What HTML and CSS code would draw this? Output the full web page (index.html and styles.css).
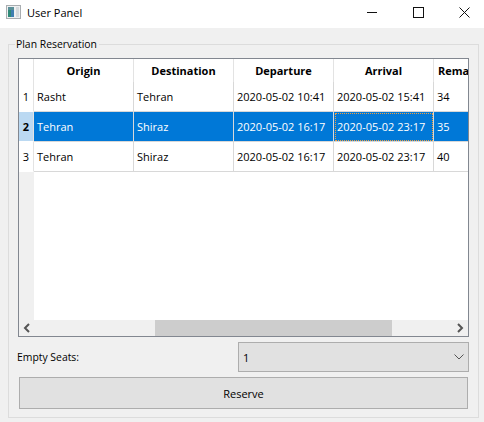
FILE: index.html
```html
<!DOCTYPE html>
<html lang="en">
<head>
    <meta charset="UTF-8">
    <title>User Panel</title>
    <link rel="stylesheet" href="styles.css">
</head>
<body>
    <div class="titlebar">
        <svg class="app-icon" width="15" height="14" viewBox="0 0 15 14">
            <rect x="0" y="0" width="15" height="14" fill="#a9adb0"/>
            <rect x="1" y="1" width="13" height="12" fill="#eef0f1"/>
            <rect x="2" y="2" width="3" height="10" fill="#2f8a78"/>
            <rect x="5" y="2" width="3" height="10" fill="#3f7fb0"/>
            <rect x="2" y="2" width="6" height="3" fill="#5a8f98"/>
            <rect x="10" y="2" width="3" height="10" fill="#d5dadd"/>
        </svg>
        <span class="title">User Panel</span>
        <div class="win-buttons">
            <svg width="11" height="11" viewBox="0 0 11 11"><path d="M0 5.5H10" stroke="#111" fill="none"/></svg>
            <svg width="11" height="11" viewBox="0 0 11 11"><rect x="0.5" y="0.5" width="10" height="10" stroke="#111" fill="none"/></svg>
            <svg width="11" height="11" viewBox="0 0 11 11"><path d="M0.5 0.5L10.5 10.5M10.5 0.5L0.5 10.5" stroke="#111" fill="none"/></svg>
        </div>
    </div>

    <div class="content">
        <fieldset class="group">
            <legend>Plan Reservation</legend>

            <div class="table-frame">
                <div class="viewport">
                    <table>
                        <thead>
                            <tr>
                                <th class="corner"></th>
                                <th>Origin</th>
                                <th>Destination</th>
                                <th>Departure</th>
                                <th>Arrival</th>
                                <th>Remaining Seats</th>
                            </tr>
                        </thead>
                        <tbody>
                            <tr>
                                <th class="row-head">1</th>
                                <td>Rasht</td>
                                <td>Tehran</td>
                                <td>2020-05-02 10:41</td>
                                <td>2020-05-02 15:41</td>
                                <td>34</td>
                            </tr>
                            <tr class="selected">
                                <th class="row-head">2</th>
                                <td>Tehran</td>
                                <td>Shiraz</td>
                                <td>2020-05-02 16:17</td>
                                <td class="current">2020-05-02 23:17</td>
                                <td>35</td>
                            </tr>
                            <tr>
                                <th class="row-head">3</th>
                                <td>Tehran</td>
                                <td>Shiraz</td>
                                <td>2020-05-02 16:17</td>
                                <td>2020-05-02 23:17</td>
                                <td>40</td>
                            </tr>
                        </tbody>
                    </table>
                </div>
                <div class="scrollbar">
                    <svg width="16" height="16" viewBox="0 0 16 16"><path d="M10 4L6 8L10 12" stroke="#555" stroke-width="2" fill="none"/></svg>
                    <div class="track"><div class="thumb"></div></div>
                    <svg width="16" height="16" viewBox="0 0 16 16"><path d="M6 4L10 8L6 12" stroke="#555" stroke-width="2" fill="none"/></svg>
                </div>
            </div>

            <div class="seats-row">
                <label class="seats-label">Empty Seats:</label>
                <div class="combo">
                    <span>1</span>
                    <svg width="10" height="6" viewBox="0 0 10 6"><path d="M0.5 0.5L5 5L9.5 0.5" stroke="#555" fill="none"/></svg>
                </div>
            </div>

            <button class="reserve">Reserve</button>
        </fieldset>
    </div>
</body>
</html>
```

FILE: styles.css
```css
html, body {
    margin: 0;
    height: 100%;
}

body {
    width: 484px;
    height: 422px;
    overflow: hidden;
    display: flex;
    flex-direction: column;
    background-color: #f0f0f0;
    color: #000;
    font-family: "Open Sans", "Noto Sans", sans-serif;
    font-size: 11px;
}

.titlebar {
    box-sizing: border-box;
    height: 28px;
    flex: none;
    display: flex;
    align-items: center;
    background-color: #fff;
    padding: 0 0 4px 6px;
}

.app-icon {
    margin-right: 6px;
}

.title {
    font-size: 11px;
}

.win-buttons {
    margin-left: auto;
    margin-right: 14px;
    display: flex;
    gap: 35px;
    align-items: center;
}

.content {
    flex: 1;
    padding: 8px 5px 4px 8px;
    min-height: 0;
    display: flex;
}

.group {
    flex: 1;
    margin: 0;
    min-width: 0;
    border: 1px solid #dcdcdc;
    padding: 6px 9px 8px 8px;
    display: flex;
    flex-direction: column;
}

.group legend {
    margin-left: -2px;
    padding: 0 2px 0 1px;
    height: 16px;
    line-height: 17px;
    font-size: 10.4px;
}

.table-frame {
    margin-left: 1px;
    height: 279px;
    box-sizing: border-box;
    border: 1px solid #828790;
    display: flex;
    flex-direction: column;
    background-color: #fff;
}

.viewport {
    flex: 1;
    min-height: 0;
    overflow: hidden;
    background: linear-gradient(to right, #f0f0f0 15px, #fff 15px);
}

table {
    border-collapse: separate;
    border-spacing: 0;
    table-layout: fixed;
    width: 515px;
}

th, td {
    box-sizing: border-box;
    width: 100px;
    padding: 0;
    font-weight: normal;
    white-space: nowrap;
    overflow: hidden;
}

thead th {
    height: 23px;
    padding-bottom: 1px;
    font-weight: bold;
    font-size: 11px;
    background-color: #fff;
    border-right: 1px solid #e3e3e3;
}

thead th.corner,
.row-head {
    width: 15px;
}

.row-head {
    height: 30px;
    text-align: center;
    background-color: #fff;
    border-right: 1px solid #e3e3e3;
    border-bottom: 1px solid #fff;
}

td {
    height: 30px;
    padding-left: 3px;
    border-right: 1px solid #d8d8d8;
    border-bottom: 1px solid #d8d8d8;
}

.selected td {
    background-color: #0078d7;
    color: #fff;
}

.selected .row-head {
    background-color: #bbd9f2;
    font-weight: bold;
}

.selected td.current {
    outline: 1px dotted #f0a040;
    outline-offset: -2px;
}

.scrollbar {
    height: 16px;
    flex: none;
    display: flex;
    background-color: #f0f0f0;
}

.track {
    flex: 1;
}

.thumb {
    width: 237px;
    height: 100%;
    margin-left: 120px;
    background-color: #cdcdcd;
}

.seats-row {
    margin-top: 5px;
    height: 30px;
    display: flex;
    align-items: center;
    justify-content: space-between;
}

.seats-label {
    font-size: 10.4px;
}

.combo {
    box-sizing: border-box;
    width: 231px;
    height: 30px;
    padding: 0 4px 0 4px;
    display: flex;
    align-items: center;
    justify-content: space-between;
    background-color: #e1e1e1;
    border: 1px solid #adadad;
}

.reserve {
    margin: 5px 1px 0 2px;
    height: 32px;
    padding: 0;
    background-color: #e1e1e1;
    border: 1px solid #adadad;
    color: #000;
    font: inherit;
}
```
